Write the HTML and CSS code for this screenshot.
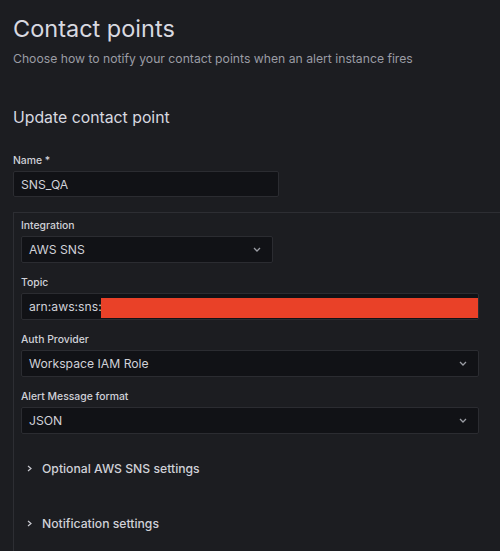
FILE: index.html
```html
<!DOCTYPE html>
<html>
<head>
<meta charset="utf-8">
<link rel="stylesheet" href="styles.css">
</head>
<body>
<div class="page">
  <h1 class="title">Contact points</h1>
  <p class="subtitle">Choose how to notify your contact points when an alert instance fires</p>
  <h2 class="section-title">Update contact point</h2>

  <div class="field">
    <label class="label">Name *</label>
    <div class="input input-name">SNS_QA</div>
  </div>

  <div class="box">
    <div class="field">
      <label class="label">Integration</label>
      <div class="input select select-short">
        <span>AWS SNS</span>
        <svg class="caret" width="8" height="5" viewBox="0 0 8 5"><path d="M1 1 L4 4 L7 1" fill="none" stroke="#9a9ca3" stroke-width="1.3"/></svg>
      </div>
    </div>
    <div class="field">
      <label class="label">Topic</label>
      <div class="input wide topic">
        <span>arn:aws:sns:</span><span class="redact"></span>
      </div>
    </div>
    <div class="field">
      <label class="label">Auth Provider</label>
      <div class="input select wide">
        <span>Workspace IAM Role</span>
        <svg class="caret" width="8" height="5" viewBox="0 0 8 5"><path d="M1 1 L4 4 L7 1" fill="none" stroke="#9a9ca3" stroke-width="1.3"/></svg>
      </div>
    </div>
    <div class="field">
      <label class="label">Alert Message format</label>
      <div class="input select wide">
        <span>JSON</span>
        <svg class="caret" width="8" height="5" viewBox="0 0 8 5"><path d="M1 1 L4 4 L7 1" fill="none" stroke="#9a9ca3" stroke-width="1.3"/></svg>
      </div>
    </div>

    <div class="collapse first">
      <svg class="chev" width="5" height="7" viewBox="0 0 5 7"><path d="M1 1 L4 3.5 L1 6" fill="none" stroke="#c8c9d0" stroke-width="1.2"/></svg>
      <span>Optional AWS SNS settings</span>
    </div>
    <div class="collapse">
      <svg class="chev" width="5" height="7" viewBox="0 0 5 7"><path d="M1 1 L4 3.5 L1 6" fill="none" stroke="#c8c9d0" stroke-width="1.2"/></svg>
      <span>Notification settings</span>
    </div>
  </div>
</div>
</body>
</html>
```

FILE: styles.css
```css
html, body {
  margin: 0;
  padding: 0;
  background: #1c1d21;
  color: #d0d1d8;
  font-family: Inter, "Noto Sans", sans-serif;
  height: 100%;
  overflow: hidden;
}

.page {
  box-sizing: border-box;
  height: 100%;
  display: flex;
  flex-direction: column;
  padding: 13px 0 0 13px;
}

.title {
  margin: 0;
  font-size: 23.5px;
  line-height: 32px;
  font-weight: 400;
  color: #d8d9e0;
}

.subtitle {
  margin: 5px 0 0;
  font-size: 12.2px;
  line-height: 18px;
  color: #9a9ca4;
}

.section-title {
  margin: 39px 0 0;
  font-size: 15.8px;
  line-height: 22px;
  font-weight: 400;
  color: #d8d9e0;
}

.field {
  display: flex;
  flex-direction: column;
}

.page > .field {
  margin-top: 25px;
}

.label {
  font-size: 10.4px;
  line-height: 14px;
  font-weight: 500;
  color: #d0d1d8;
  margin-bottom: 3px;
}

.input {
  box-sizing: border-box;
  height: 27px;
  background: #111216;
  border: 1px solid #2b2c31;
  border-radius: 2px;
  display: flex;
  align-items: center;
  padding: 0 7px;
  font-size: 12.2px;
  color: #d0d1d8;
}

.input-name {
  width: 266px;
  height: 26px;
}

.box {
  flex: 1;
  min-height: 0;
  margin-top: 15px;
  border-top: 1px solid #2d2e33;
  border-left: 1px solid #2d2e33;
  padding: 6px 0 0 7px;
}

.box .field {
  margin-bottom: 13px;
}

.select {
  justify-content: space-between;
  padding-right: 11px;
}

.select-short {
  width: 252px;
}

.wide {
  width: 458px;
}

.topic {
  padding-right: 0;
}

.redact {
  flex: 1;
  height: 20px;
  margin-top: 3px;
  margin-left: -1px;
  background: #e94128;
}

.collapse {
  display: flex;
  align-items: center;
  gap: 10px;
  padding-left: 6px;
  font-size: 12.2px;
  font-weight: 500;
  color: #d0d1d8;
  height: 20px;
  margin-top: 35px;
}

.collapse.first {
  margin-top: 24px;
}
```
